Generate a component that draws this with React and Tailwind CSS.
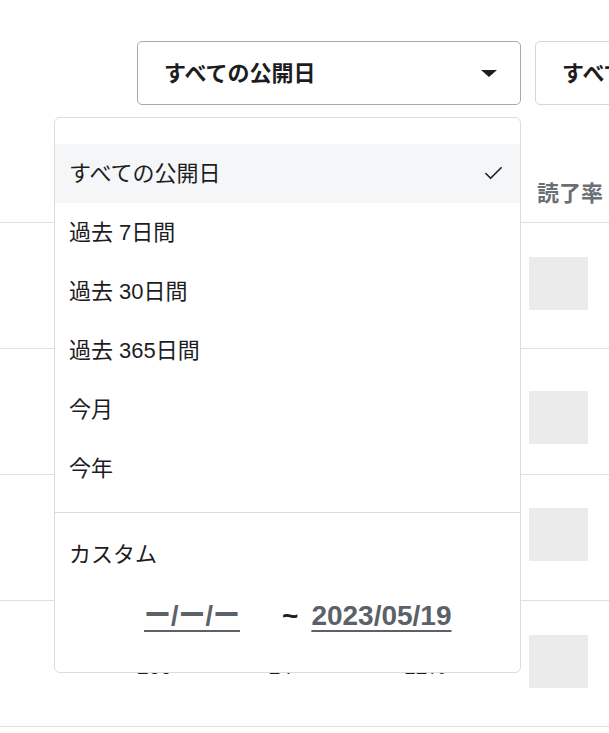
import { Check } from 'lucide-react';

const options = ['すべての公開日', '過去 7日間', '過去 30日間', '過去 365日間', '今月', '今年'];

const rows = [
  { views: '1,250', reads: '86', rate: '6.9%', boxTop: 'mt-[34px]' },
  { views: '842', reads: '51', rate: '6.1%', boxTop: 'mt-[42px]' },
  { views: '517', reads: '33', rate: '6.4%', boxTop: 'mt-[33px]' },
  { views: '200', reads: '24', rate: '12%', boxTop: 'mt-[34px]' },
];

function DateDropdown() {
  return (
    <div className="absolute left-[54px] top-[117px] w-[467px] h-[556px] bg-white border border-[#dcdcdc] rounded-[6px] pt-[26px]">
      {options.map((opt, i) => (
        <div
          key={opt}
          className={`h-[59px] flex items-center justify-between pl-[14px] pr-[15px] text-[22px] text-[#1d1d1f] ${i === 0 ? 'bg-[#f5f6f8]' : ''}`}
        >
          <span>{opt}</span>
          {i === 0 && <Check size={23} strokeWidth={1.7} className="text-[#1d1d1f]" />}
        </div>
      ))}
      <div className="mt-[14px] border-t border-[#dcdcdc]" />
      <div className="pl-[14px] pt-[27px] text-[22px] text-[#1d1d1f] leading-[30px]">カスタム</div>
      <div className="mt-[30px] flex items-center pl-[89px] leading-[32px] font-bold text-[#5b6168] whitespace-nowrap">
        <span className="text-[27px] underline underline-offset-[5px] decoration-2">ー/ー/ー</span>
        <span className="ml-[42px] text-[#1d1d1f] text-[28px]">~</span>
        <span className="ml-[13px] text-[28px] underline underline-offset-[5px] decoration-2">2023/05/19</span>
      </div>
    </div>
  );
}

export default function App() {
  return (
    <div
      className="relative w-[609px] h-[733px] overflow-hidden bg-white"
      style={{ fontFamily: '"Liberation Sans", "Noto Sans CJK JP", sans-serif' }}
    >
      <div className="pt-[41px] pl-[137px] flex gap-[14px]">
        <div className="shrink-0 w-[384px] h-[64px] border border-[#a9a9a9] rounded-[5px] flex items-center justify-between pl-[26px] pr-[23px]">
          <span className="text-[22px] font-bold text-[#1d1d1f]">すべての公開日</span>
          <span className="w-0 h-0 border-l-[8px] border-r-[8px] border-t-[7px] border-l-transparent border-r-transparent border-t-[#1d1d1f]" />
        </div>
        <div className="shrink-0 w-[240px] h-[64px] border border-[#d6d6d6] rounded-[5px] flex items-center pl-[26px]">
          <span className="text-[22px] font-bold text-[#1d1d1f] whitespace-nowrap">すべての投稿</span>
        </div>
      </div>

      <div className="mt-[59px]">
        <div className="h-[59px] flex items-center border-b border-[#e0e0e0]">
          <span className="ml-[537px] text-[22px] font-bold text-[#6b6f73] whitespace-nowrap">読了率</span>
        </div>
        {rows.map((r) => (
          <div key={r.views} className="h-[126px] border-b border-[#e0e0e0] flex items-start">
            <div className="w-[529px] flex pt-[50px] text-[21px] text-[#1d1d1f]">
              <span className="ml-[100px] w-[72px] text-right">{r.views}</span>
              <span className="ml-[90px] w-[30px] text-right">{r.reads}</span>
              <span className="ml-[110px] w-[44px] text-right">{r.rate}</span>
            </div>
            <div className={`${r.boxTop} w-[59px] h-[53px] bg-[#ebebeb]`} />
          </div>
        ))}
      </div>

      <DateDropdown />
    </div>
  );
}
